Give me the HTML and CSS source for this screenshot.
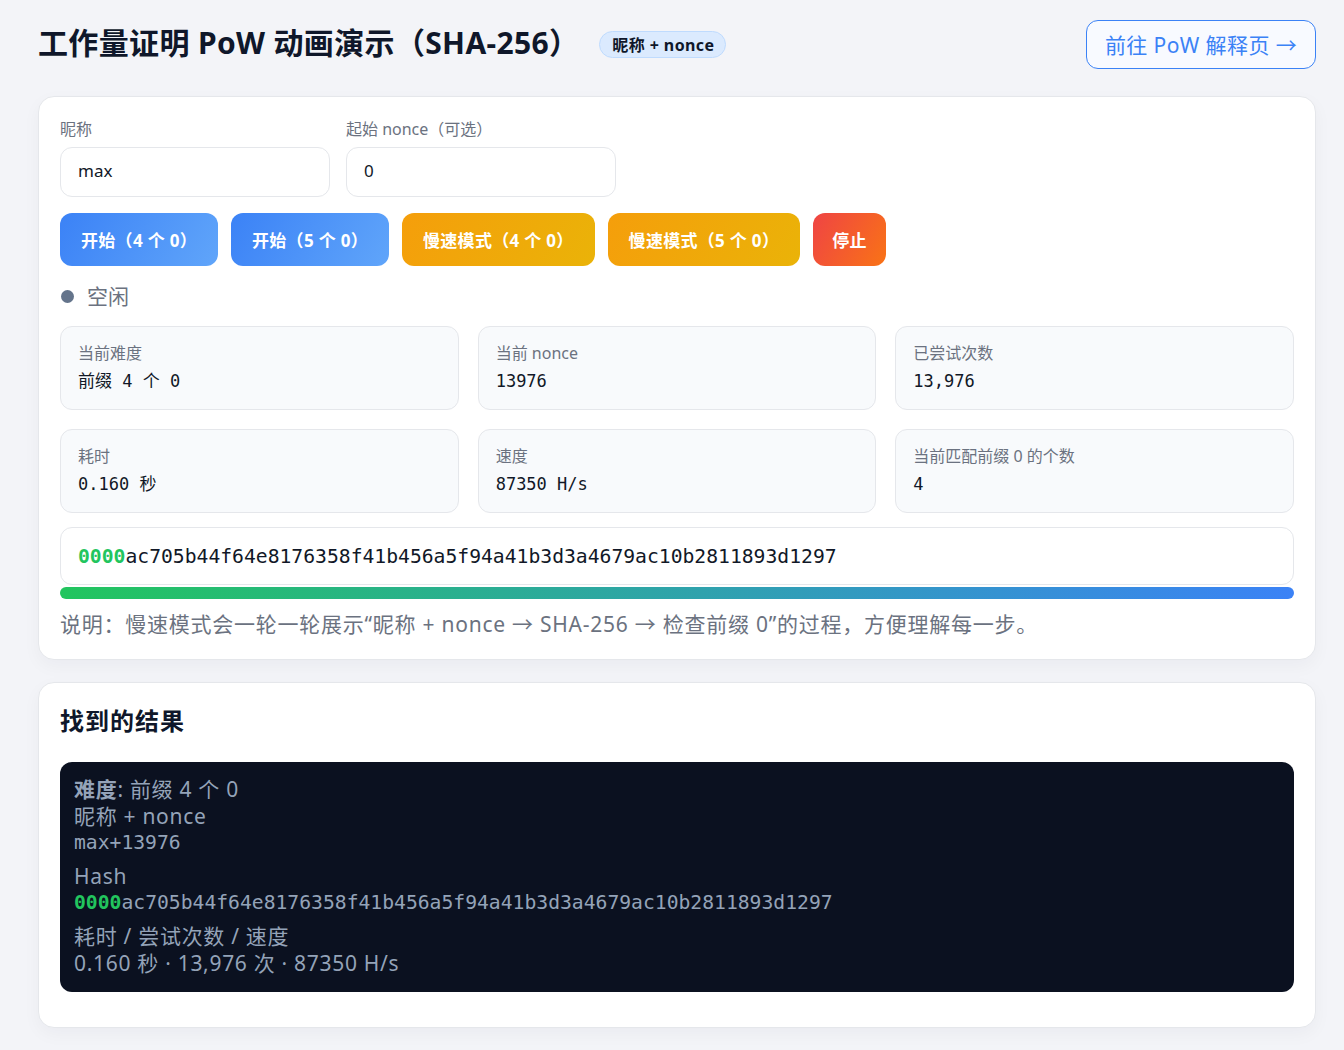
FILE: index.html
```html
<!DOCTYPE html>
<html lang="zh-CN">
<head>
<meta charset="utf-8">
<title>工作量证明 PoW 动画演示</title>
<link rel="stylesheet" href="styles.css">
</head>
<body>
<div class="page">
  <header class="topbar">
    <div class="title-wrap">
      <h1 class="title">工作量证明 PoW 动画演示（SHA-256）</h1>
      <span class="badge">昵称 + nonce</span>
    </div>
    <a class="link-btn" href="#">前往 PoW 解释页 →</a>
  </header>

  <section class="card">
    <div class="fields">
      <label class="field">
        <span class="field-label">昵称</span>
        <span class="input">max</span>
      </label>
      <label class="field">
        <span class="field-label">起始 nonce（可选）</span>
        <span class="input">0</span>
      </label>
    </div>
    <div class="actions">
      <button class="btn btn-blue">开始（4 个 0）</button>
      <button class="btn btn-blue">开始（5 个 0）</button>
      <button class="btn btn-amber">慢速模式（4 个 0）</button>
      <button class="btn btn-amber">慢速模式（5 个 0）</button>
      <button class="btn btn-red">停止</button>
    </div>
    <div class="status"><span class="dot"></span><span>空闲</span></div>
    <div class="stats">
      <div class="stat"><div class="stat-label">当前难度</div><div class="stat-value">前缀 4 个 0</div></div>
      <div class="stat"><div class="stat-label">当前 nonce</div><div class="stat-value">13976</div></div>
      <div class="stat"><div class="stat-label">已尝试次数</div><div class="stat-value">13,976</div></div>
      <div class="stat"><div class="stat-label">耗时</div><div class="stat-value">0.160 秒</div></div>
      <div class="stat"><div class="stat-label">速度</div><div class="stat-value">87350 H/s</div></div>
      <div class="stat"><div class="stat-label">当前匹配前缀 0 的个数</div><div class="stat-value">4</div></div>
    </div>
    <div class="hash-box"><span class="zeros">0000</span>ac705b44f64e8176358f41b456a5f94a41b3d3a4679ac10b2811893d1297</div>
    <div class="progress"></div>
    <p class="note">说明：慢速模式会一轮一轮展示“昵称 + nonce → SHA-256 → 检查前缀 0”的过程，方便理解每一步。</p>
  </section>

  <section class="card card-result">
    <h2 class="section-title">找到的结果</h2>
    <div class="result">
      <div class="r-line"><b>难度</b>: 前缀 4 个 0</div>
      <div class="r-line">昵称 + nonce</div>
      <div class="r-mono">max+13976</div>
      <div class="r-line r-gap">Hash</div>
      <div class="r-mono"><span class="zeros">0000</span>ac705b44f64e8176358f41b456a5f94a41b3d3a4679ac10b2811893d1297</div>
      <div class="r-line r-gap">耗时 / 尝试次数 / 速度</div>
      <div class="r-line">0.160 秒 · 13,976 次 · 87350 H/s</div>
    </div>
  </section>
</div>
</body>
</html>
```

FILE: styles.css
```css
* { box-sizing: border-box; }
html, body { margin: 0; padding: 0; }
body {
  background: #f3f4f8;
  font-family: "Noto Sans", "Noto Sans CJK SC", sans-serif;
  color: #0f172a;
}
.page {
  padding: 20px 28px 24px 38px;
}
.topbar {
  display: flex;
  align-items: center;
  justify-content: space-between;
  height: 48px;
}
.title-wrap {
  display: flex;
  align-items: center;
  gap: 20px;
}
.title {
  margin: -2px 0 0;
  font-size: 30px;
  font-weight: 700;
  line-height: 48px;
  letter-spacing: 0.35px;
  color: #0f172a;
}
.badge {
  display: inline-flex;
  align-items: center;
  height: 27px;
  padding: 0 11px 0 12px;
  border-radius: 14px;
  background: #dbeafe;
  border: 1px solid #bfdbfe;
  color: #0f172a;
  font-size: 16px;
  letter-spacing: 0.4px;
  font-weight: 700;
}
.link-btn {
  display: inline-flex;
  align-items: center;
  justify-content: center;
  width: 230px;
  height: 49px;
  border: 1px solid #3b82f6;
  border-radius: 12px;
  color: #3b82f6;
  font-size: 21px;
  letter-spacing: 0.4px;
  text-decoration: none;
  background: #f8faff;
}
.card {
  margin-top: 28px;
  background: #fff;
  border: 1px solid #e5e7eb;
  border-radius: 16px;
  box-shadow: 0 6px 18px rgba(15, 23, 42, 0.04);
  padding: 21px 21px 20px;
}
.fields {
  display: flex;
  gap: 16px;
}
.field {
  display: flex;
  flex-direction: column;
  width: 270px;
}
.field-label {
  font-size: 16px;
  line-height: 22px;
  color: #6b7280;
  margin-bottom: 7px;
}
.input {
  display: flex;
  align-items: center;
  height: 50px;
  border: 1px solid #e5e7eb;
  border-radius: 12px;
  padding: 0 17px 3px;
  font-size: 17px;
  color: #111827;
  background: #fff;
}
.actions {
  display: flex;
  gap: 13px;
  margin-top: 16px;
}
.btn {
  height: 53px;
  border: none;
  border-radius: 12px;
  padding: 0 21px;
  font-family: inherit;
  font-size: 17px;
  font-weight: 700;
  letter-spacing: 0.3px;
  color: #fff;
  cursor: pointer;
}
.btn-blue { background: linear-gradient(120deg, #3b82f6, #60a5fa); }
.btn-amber { background: linear-gradient(120deg, #f59e0b, #eab308); }
.btn-red { background: linear-gradient(120deg, #ef4444, #f97316); padding: 0 19px; }
.status {
  display: flex;
  align-items: center;
  gap: 13px;
  margin-top: 16px;
  font-size: 21px;
  line-height: 28px;
  color: #6b7280;
  padding-left: 1px;
}
.dot {
  width: 13px;
  height: 13px;
  border-radius: 50%;
  background: #64748b;
}
.stats {
  display: grid;
  grid-template-columns: repeat(3, 1fr);
  gap: 19px;
  margin-top: 16px;
}
.stat {
  height: 84px;
  background: #f8fafc;
  border: 1px solid #e5e7eb;
  border-radius: 12px;
  padding: 15px 17px;
}
.stat-label {
  font-size: 16px;
  line-height: 22px;
  color: #6b7280;
}
.stat-value {
  margin-top: 5px;
  font-family: "DejaVu Sans Mono", "Noto Sans CJK SC", monospace;
  font-size: 17px;
  line-height: 24px;
  color: #111827;
}
.hash-box {
  margin-top: 14px;
  height: 58px;
  display: flex;
  align-items: center;
  padding: 0 17px;
  border: 1px solid #e5e7eb;
  border-radius: 12px;
  background: #fff;
  font-family: "DejaVu Sans Mono", monospace;
  font-size: 19.7px;
  color: #111827;
}
.zeros { color: #22c55e; font-weight: 700; }
.progress {
  margin-top: 2px;
  height: 12px;
  border-radius: 6px;
  background: linear-gradient(90deg, #22c55e, #3b82f6);
}
.note {
  margin: 10px 0 0;
  font-size: 21px;
  line-height: 30px;
  letter-spacing: 0.75px;
  color: #6b7280;
}
.card-result {
  margin-top: 22px;
  padding-bottom: 35px;
}
.section-title {
  margin: 0;
  font-size: 24px;
  line-height: 34px;
  letter-spacing: 1px;
  font-weight: 700;
  color: #0f172a;
}
.result {
  margin-top: 24px;
  background: #0b1120;
  border-radius: 12px;
  padding: 14px 14px 15px;
  color: #94a3b8;
}
.r-line {
  font-size: 21px;
  line-height: 27px;
  letter-spacing: 0.7px;
}
.r-line b { font-weight: 700; }
.r-mono {
  font-family: "DejaVu Sans Mono", monospace;
  font-size: 19.7px;
  line-height: 26px;
}
.r-gap { margin-top: 7px; }
```
